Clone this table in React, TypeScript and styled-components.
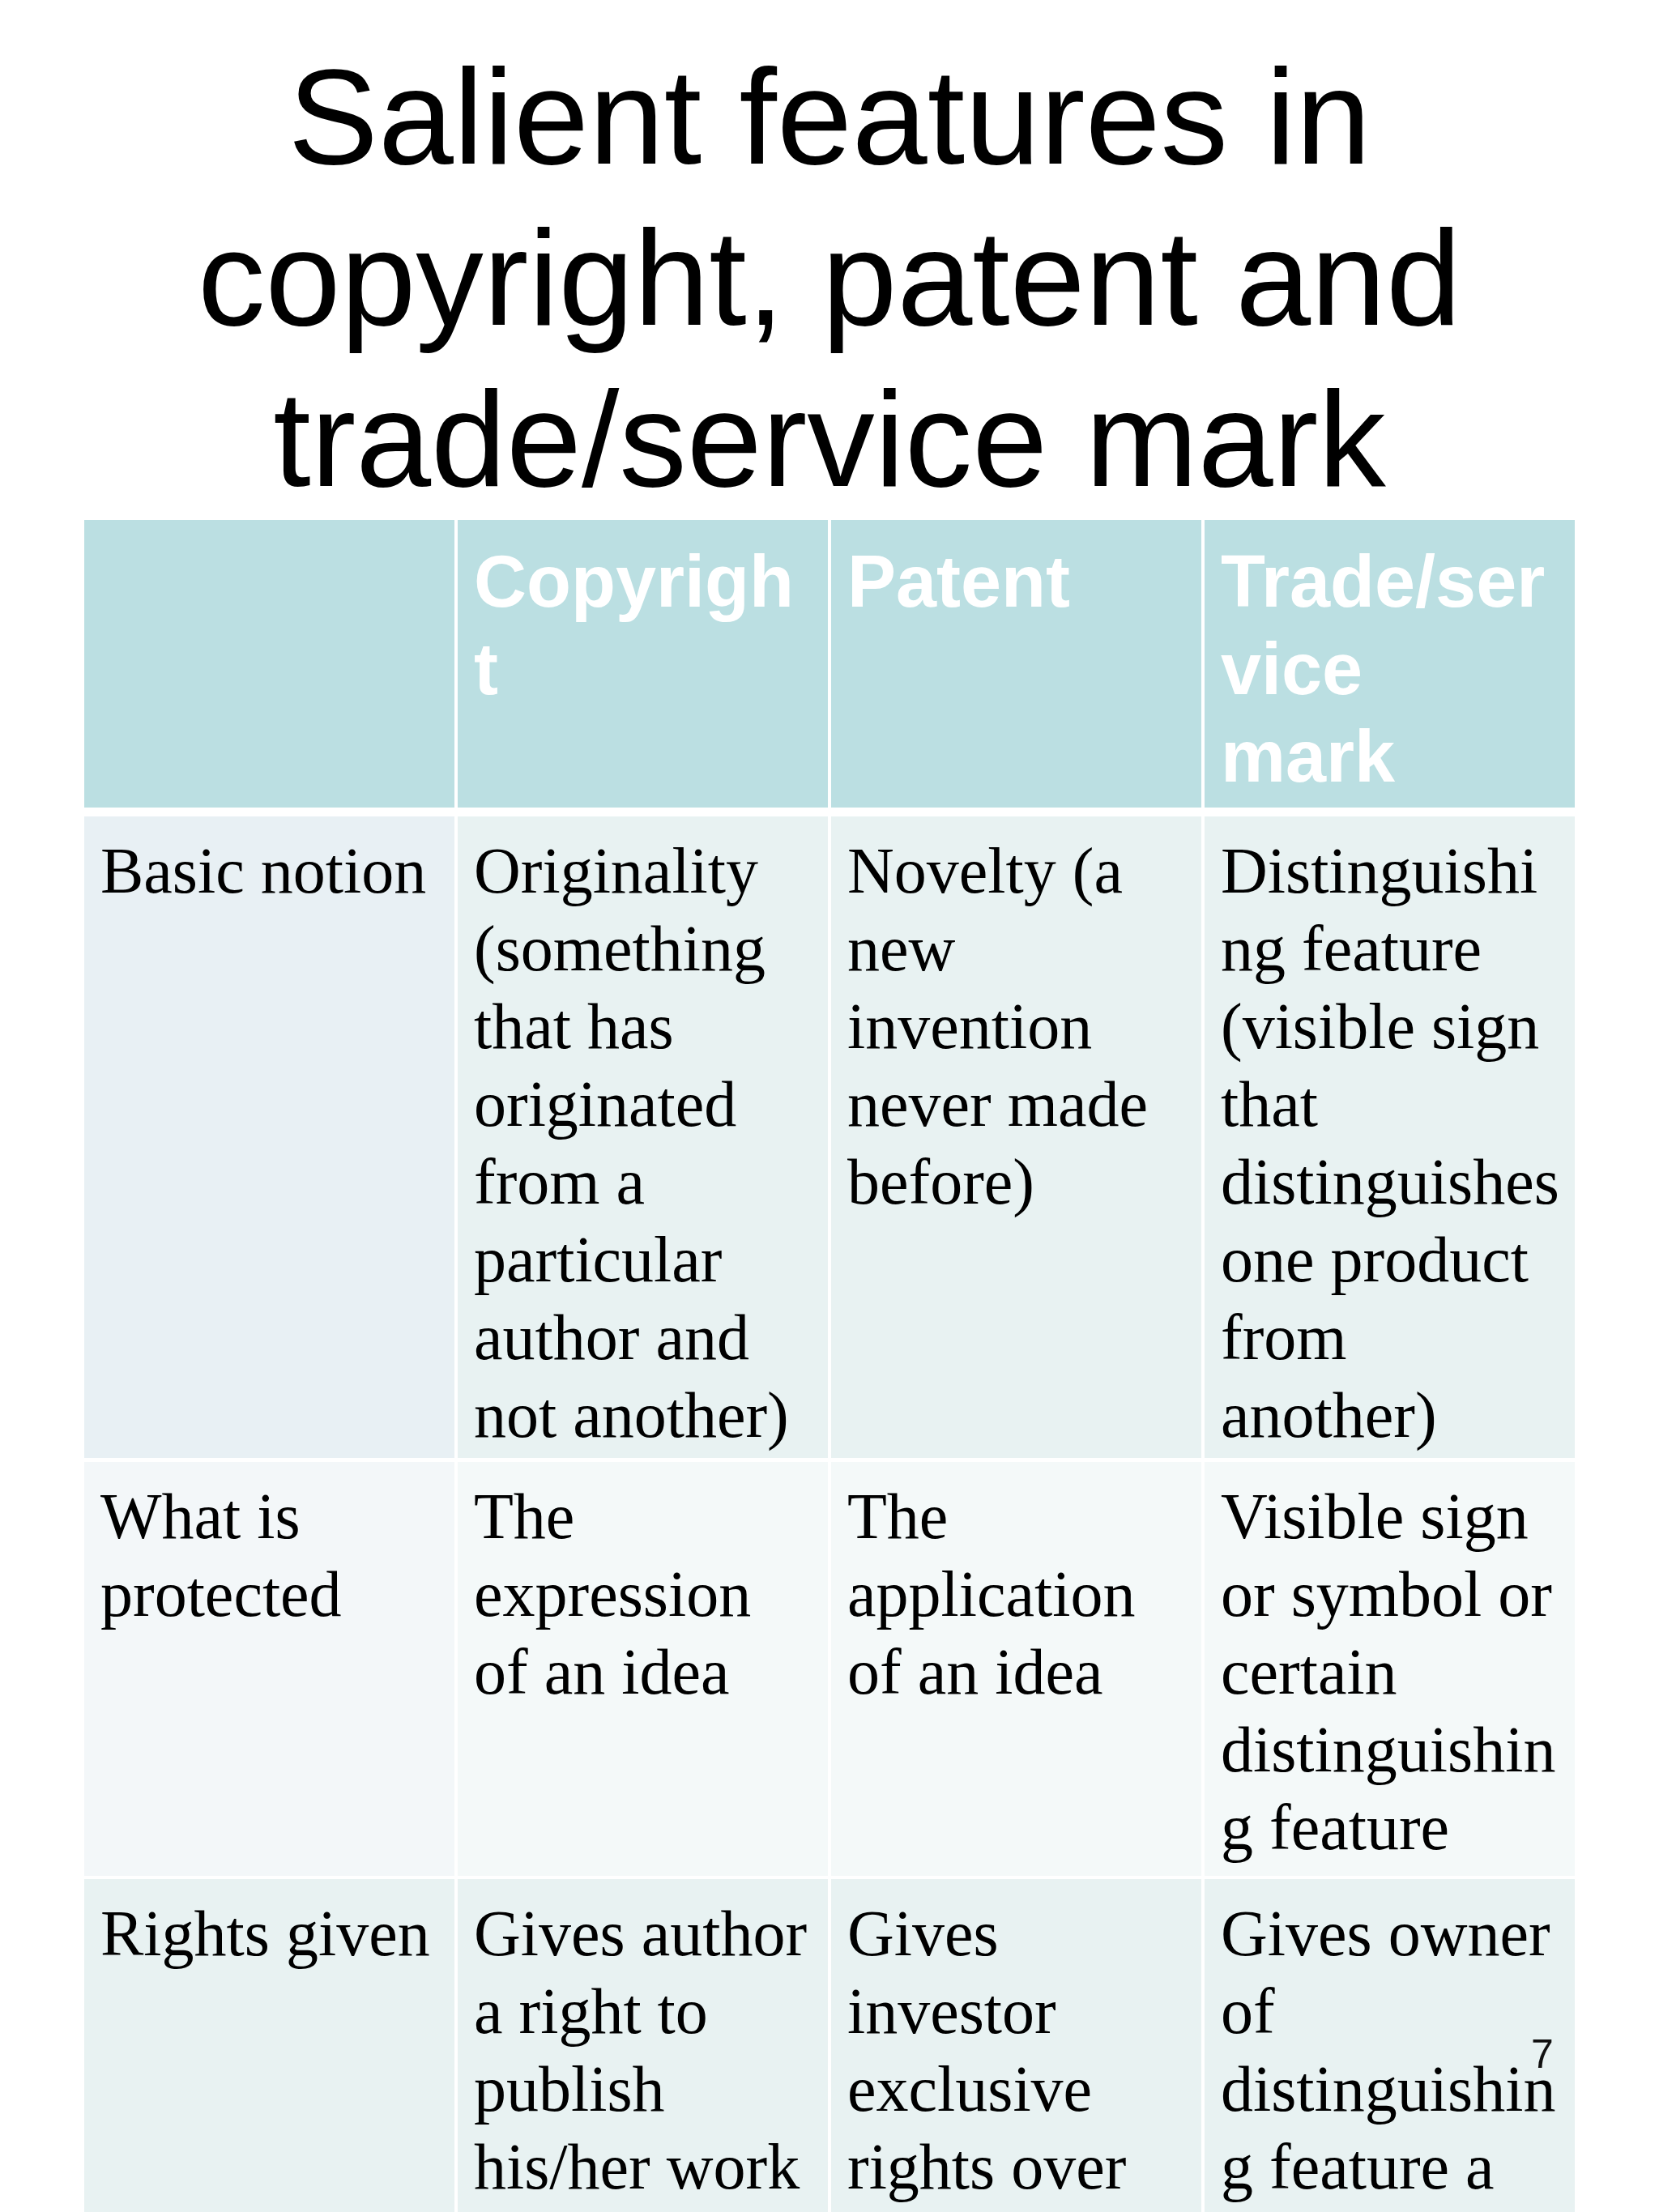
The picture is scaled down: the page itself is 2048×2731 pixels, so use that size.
import React from "react";
import styled, { createGlobalStyle } from "styled-components";

const GlobalStyle = createGlobalStyle`
  html, body {
    margin: 0;
    padding: 0;
    background: #ffffff;
  }
  body {
    width: 2048px;
    height: 2731px;
    overflow: hidden;
  }
`;

const Slide = styled.div`
  position: relative;
  width: 2048px;
  height: 2731px;
  overflow: hidden;
  background: #ffffff;
  display: flex;
  flex-direction: column;
  align-items: center;
`;

const Title = styled.h1`
  margin: 0;
  padding-top: 45px;
  font-family: "Liberation Sans", Arial, sans-serif;
  font-weight: 400;
  font-size: 167px;
  line-height: 199px;
  color: #000000;
  text-align: center;
  white-space: nowrap;
`;

const Table = styled.div`
  width: 1840px;
  display: grid;
  grid-template-columns: repeat(4, 457px);
  grid-template-rows: 355px 803px 516px 1000px;
  column-gap: 4px;
`;

const HeaderCell = styled.div`
  background: #bbdfe2;
  padding: 22px 0 0 20px;
  font-family: "Liberation Sans", Arial, sans-serif;
  font-weight: 700;
  font-size: 90px;
  line-height: 108px;
  color: #ffffff;
  white-space: nowrap;
  overflow: hidden;
`;

const BodyCell = styled.div<{ $bg: string; $top: number }>`
  background: ${(p) => p.$bg};
  margin-top: ${(p) => p.$top}px;
  padding: 19px 0 0 20px;
  font-family: "Liberation Serif", "Times New Roman", serif;
  font-size: 80px;
  line-height: 96px;
  color: #000000;
  white-space: nowrap;
  overflow: hidden;
`;

const SlideNumber = styled.div`
  position: absolute;
  left: 1890px;
  top: 2511px;
  font-family: "Liberation Sans", Arial, sans-serif;
  font-size: 50px;
  line-height: 50px;
  color: #111111;
`;

const header: string[][] = [[], ["Copyrigh", "t"], ["Patent"], ["Trade/ser", "vice", "mark"]];

type Row = { top: number; bg: string[]; cells: string[][] };

const rows: Row[] = [
  {
    top: 11,
    bg: ["#e8f0f4", "#e8f2f2", "#e8f2f2", "#e8f2f2"],
    cells: [
      ["Basic notion"],
      ["Originality", "(something", "that has", "originated", "from a", "particular", "author and", "not another)"],
      ["Novelty (a", "new", "invention", "never made", "before)"],
      ["Distinguishi", "ng feature", "(visible sign", "that", "distinguishes", "one product", "from", "another)"],
    ],
  },
  {
    top: 5,
    bg: ["#f3f7f9", "#f4f9f9", "#f4f9f9", "#f4f9f9"],
    cells: [
      ["What is", "protected"],
      ["The", "expression", "of an idea"],
      ["The", "application", "of an idea"],
      ["Visible sign", "or symbol or", "certain", "distinguishin", "g feature"],
    ],
  },
  {
    top: 4,
    bg: ["#e8f2f2", "#e8f2f2", "#e8f2f2", "#e8f2f2"],
    cells: [
      ["Rights given"],
      ["Gives author", "a right to", "publish", "his/her work"],
      ["Gives", "investor", "exclusive", "rights over"],
      ["Gives owner", "of", "distinguishin", "g feature a"],
    ],
  },
];

const Lines: React.FC<{ lines: string[] }> = ({ lines }) => (
  <>
    {lines.map((l, i) => (
      <React.Fragment key={i}>
        {l}
        {i < lines.length - 1 && <br />}
      </React.Fragment>
    ))}
  </>
);

export default function App() {
  return (
    <>
      <GlobalStyle />
      <Slide>
        <Title>
          Salient features in
          <br />
          copyright, patent and
          <br />
          trade/service mark
        </Title>
        <Table>
          {header.map((h, i) => (
            <HeaderCell key={`h${i}`}>
              <Lines lines={h} />
            </HeaderCell>
          ))}
          {rows.map((r, ri) =>
            r.cells.map((c, ci) => (
              <BodyCell key={`r${ri}c${ci}`} $bg={r.bg[ci]} $top={r.top}>
                <Lines lines={c} />
              </BodyCell>
            ))
          )}
        </Table>
        <SlideNumber>7</SlideNumber>
      </Slide>
    </>
  );
}
